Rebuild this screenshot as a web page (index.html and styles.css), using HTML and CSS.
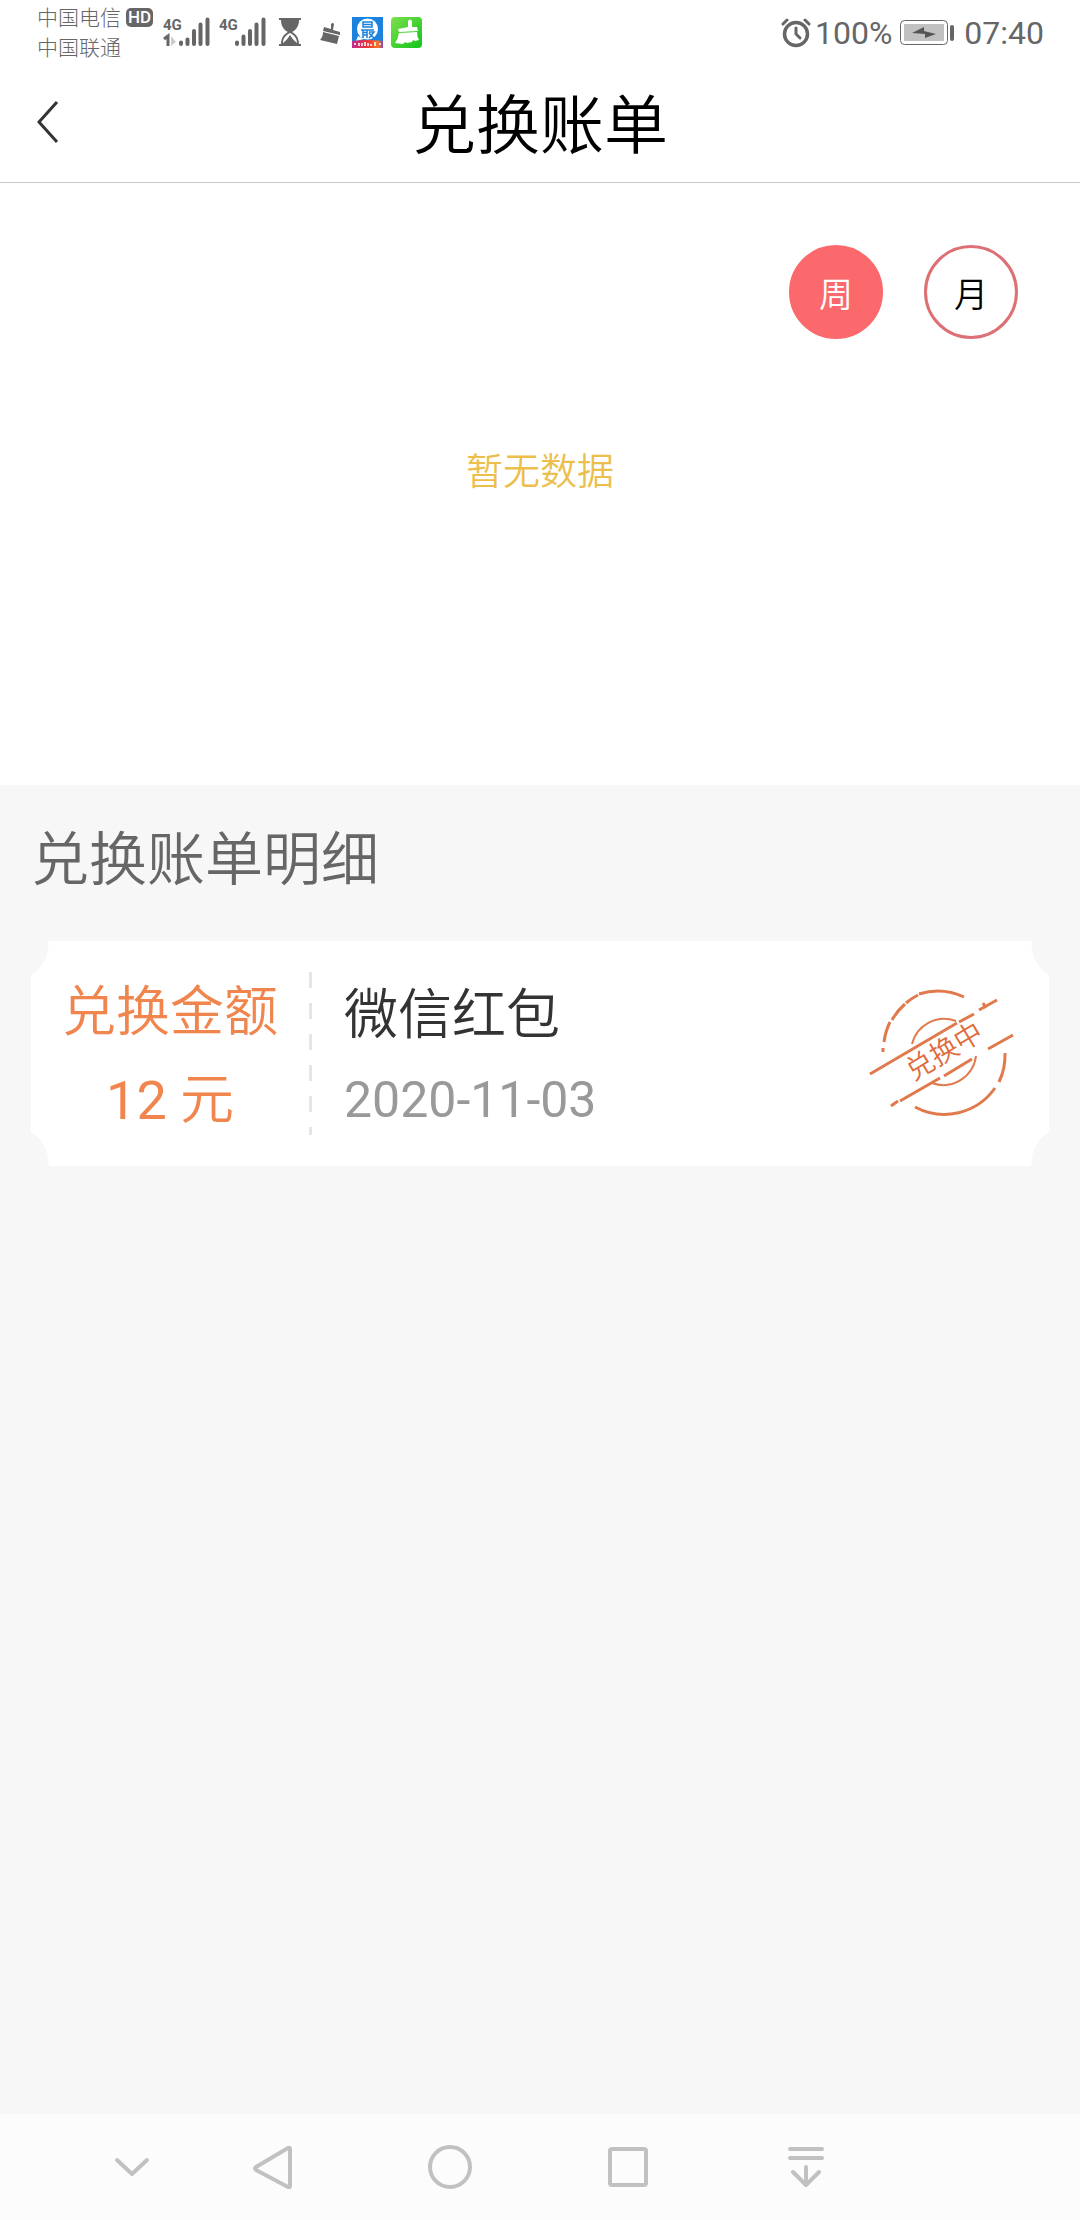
FILE: index.html
```
<!DOCTYPE html>
<html lang="zh-CN">
<head>
    <meta charset="UTF-8">
    <meta name="viewport" content="width=device-width, initial-scale=1">
    <title>兑换账单</title>
    <link rel="stylesheet" href="styles.css">
</head>
<body>
    <!-- 状态栏 -->
    <div class="status">
        <div class="carriers">
            <span>中国电信</span>
            <span>中国联通</span>
        </div>
        <span class="hd">HD</span>
        <div class="status-icons">
            <svg class="signal" width="48" height="32" viewBox="0 0 48 32">
                <text class="net" x="0" y="14">4G</text>
                <path d="M1 23l4-3v10" fill="none" stroke="#666" stroke-width="3"/>
                <path d="M8 20v10l5-4z" fill="#ccc"/>
                <path class="bars" d="M18 26.500v1.500M24.500 23.500v4.500M31 15v13M37.500 8.500v19.500M44.500 3.500v24.500"/>
            </svg>
            <svg class="signal" width="48" height="32" viewBox="0 0 48 32">
                <text class="net" x="0" y="14">4G</text>
                <path class="bars" d="M18 26.500v1.500M24.500 20.500v7.500M31 15v13M37.500 8.500v19.500M44.500 3.500v24.500"/>
            </svg>
            <svg width="22" height="32" viewBox="0 0 22 32">
                <path d="M0 2h22v2H0zM0 28h22v2H0z" fill="#666"/>
                <path d="M2 4h18c0 6-3 10-7 12 4 2 7 6 7 12H2c0-6 3-10 7-12C5 14 2 10 2 4z" fill="#666"/>
                <path d="M11 17c4 2 7 5 7 10l-7-6-7 6c0-5 3-8 7-10z" fill="#fff"/>
                <path d="M11 19l2 3 4 5H5l4-5z" fill="#666"/>
            </svg>
            <svg class="broom" width="22" height="32" viewBox="0 0 22 32">
                <path d="M12 8q2-2 3 0l-1 6 7 2v3L4 15l1-4 7 2zM4 16l16 4-2 8-17-4c2-2 3-5 3-8z" fill="#666"/>
            </svg>
            <svg class="app" width="31" height="31" viewBox="0 0 31 31">
                <defs>
                    <linearGradient id="band">
                        <stop offset="0" stop-color="#c0308f"/>
                        <stop offset=".5" stop-color="#f03038"/>
                        <stop offset=".85" stop-color="#f27a28"/>
                        <stop offset="1" stop-color="#8a3fb0"/>
                    </linearGradient>
                </defs>
                <path d="M0 0h31v31H0z" fill="#1b83dd"/>
                <circle cx="15.500" cy="12" r="10.500" fill="#fff"/>
                <path d="M6 19l-2 5 8-2z" fill="#fff"/>
                <path d="M11 5h9v5h-9zM11 7.500h9M9 13h13M11 13v8M15 13v8M11 15.500h4M11 18h4M17 15h5l-5 6M17 16l5 5" fill="none" stroke="#1b83dd" stroke-width="1.500"/>
                <path d="M0 24q15-2 31 0v7H0z" fill="url(#band)"/>
                <path d="M2 27h2M7 26v3M10 26v3M13 25v4M16 26v3M19 27v2M23 25v4M27 27h2" stroke="#fff" stroke-width="1.500"/>
            </svg>
            <svg class="app" width="31" height="31" viewBox="0 0 31 31">
                <defs>
                    <linearGradient id="green" x1="0" y1="0" x2="1" y2="1">
                        <stop offset="0" stop-color="#7ee04c"/>
                        <stop offset="1" stop-color="#12c41c"/>
                    </linearGradient>
                </defs>
                <rect width="31" height="31" rx="4" fill="url(#green)"/>
                <path d="M17 4q2-3 4 0v6l5 0 1 4L8 15l-1-3 10-2z" fill="#fff"/>
                <path d="M8 16l18-1q0 5 2 8l-4 1-2-1-1 2-5 1-2-1-2 2-8-1q3-4 4-10z" fill="#fff"/>
            </svg>
        </div>
        <div class="status-right">
            <svg width="30" height="30" viewBox="0 0 30 30" fill="none" stroke="#666" stroke-linecap="round">
                <circle cx="15" cy="16" r="11.500" stroke-width="3.500"/>
                <path d="M15 10v6l4 4" stroke-width="3"/>
                <path d="M2 6l4-4M24 2l4 4" stroke-width="3"/>
            </svg>
            <span class="percent">100%</span>
            <svg class="battery" width="55" height="26" viewBox="0 0 55 26">
                <rect x=".5" y=".5" width="47" height="24" rx="4" fill="#fff" stroke="#666"/>
                <rect x="4" y="4" width="40" height="17" fill="#c1c1c1"/>
                <path d="M12 13l12-6v4l12 3-11 4v-4z" fill="#555"/>
                <rect x="50" y="5" width="4" height="16" rx="2" fill="#666"/>
            </svg>
            <time>07:40</time>
        </div>
    </div>

    <header class="header">
        <button class="back" type="button" aria-label="返回">
            <svg width="22" height="42" viewBox="0 0 22 42">
                <path d="M20 1L2 21l18 20" fill="none" stroke="#333" stroke-width="3"/>
            </svg>
        </button>
        <h1>兑换账单</h1>
    </header>

    <section class="chart">
        <div class="tabs">
            <button class="tab active" type="button">周</button>
            <button class="tab" type="button">月</button>
        </div>
        <p class="empty">暂无数据</p>
    </section>

    <main class="detail">
        <h2>兑换账单明细</h2>
        <article class="ticket">
            <div class="amount">
                <p>兑换金额</p>
                <p><span class="number">12</span> 元</p>
            </div>
            <div class="divider"></div>
            <div class="info">
                <h3>微信红包</h3>
                <time>2020-11-03</time>
            </div>
            <!-- 兑换中 印章 -->
            <svg class="stamp" width="150" height="136" viewBox="0 0 150 136">
                <g fill="none" stroke="#e07a4c">
                    <path d="M16 66V62M17 56A62 62 0 0 1 23 36M25 34A62 62 0 0 1 38 18M39 17A62 62 0 0 1 51 9M52 8A62 62 0 0 1 97 11" stroke-width="3"/>
                    <path d="M138 67A62 62 0 0 1 132 96M128 102A62 62 0 0 1 48 121" stroke-width="3"/>
                    <path d="M45 58A33 33 0 0 1 89 35M109 70A33 33 0 0 1 65 97" stroke-width="2"/>
                    <path d="M3 88L90 37M92 36L107 28M112 24L130 14M116 17l3 5M24 120l7-5M33 115L73 92M77 90L105 73M121 63L146 49" stroke-width="3"/>
                </g>
                <text x="77" y="75" transform="rotate(-31 77 65)">兑换中</text>
            </svg>
        </article>
    </main>

    <!-- 系统导航栏 -->
    <nav class="navbar">
        <button class="hide" type="button" aria-label="收起">
            <svg width="44" height="44" viewBox="0 0 44 44"><path d="M7 15l15 14 15-14"/></svg>
        </button>
        <button type="button" aria-label="返回">
            <svg width="44" height="44" viewBox="0 0 44 44"><path d="M40 4v37q0 2-2 1L6 25q-2-2 0-3L38 3q2-1 2 1z"/></svg>
        </button>
        <button type="button" aria-label="主页">
            <svg width="44" height="44" viewBox="0 0 44 44"><circle cx="22" cy="22" r="20"/></svg>
        </button>
        <button type="button" aria-label="最近任务">
            <svg width="44" height="44" viewBox="0 0 44 44"><rect x="4" y="4" width="36" height="36" rx="2"/></svg>
        </button>
        <button type="button" aria-label="通知">
            <svg width="44" height="44" viewBox="0 0 44 44"><path d="M6 4h32M6 13h32M22 22v18M9 27l13 13 13-13"/></svg>
        </button>
    </nav>
</body>
</html>
```
FILE: styles.css
```
* {
    box-sizing: border-box;
}
body {
    display: flex;
    flex-direction: column;
    min-height: 100vh;
    margin: 0;
    background-color: #ffffff;
    font-family: Roboto, "Noto Sans CJK SC", sans-serif;
}
h1, h2, h3, p {
    margin: 0;
    font-weight: 350;
}
button {
    padding: 0;
    border: none;
    background: none;
    font-family: inherit;
}
svg {
    display: block;
    flex: none;
}

/* 状态栏 */
.status {
    display: flex;
    height: 66px;
    padding: 0 36px 0 37px;
    color: #666666;
}
.carriers {
    display: flex;
    flex-direction: column;
    padding-top: 3px;
    font-size: 21px;
    font-weight: 300;
    line-height: 30px;
}
.hd {
    width: 27px;
    height: 19px;
    margin: 8px 0 0 5px;
    border-radius: 5px;
    background-color: #666666;
    color: #ffffff;
    font-size: 17px;
    font-weight: 500;
    line-height: 19px;
    text-align: center;
}
.status-icons {
    display: flex;
    align-items: flex-start;
    gap: 8px;
    padding: 16px 0 0 10px;
}
.signal .bars {
    fill: none;
    stroke: #666666;
    stroke-width: 4;
    stroke-linecap: round;
}
.signal .net {
    fill: #666666;
    font-size: 15px;
    font-weight: 700;
}
.signal + svg {
    margin-left: 4px;
}
.signal + .signal {
    margin-left: 0;
}
.broom {
    margin: 0 3px 0 10px;
}
.app {
    margin-top: 1px;
}
.status-right {
    display: flex;
    align-items: center;
    height: 66px;
    margin-left: auto;
    font-size: 32px;
}
.percent {
    margin-left: 4px;
}
.battery {
    margin: 0 9px 0 8px;
}

/* 标题 */
.header {
    display: grid;
    grid-template-columns: 100px 1fr 100px;
    align-items: center;
    height: 117px;
    border-bottom: 1px solid #c8c8c8;
}
.header h1 {
    grid-column: 2;
    padding-top: 6px;
    color: #000000;
    font-size: 64px;
    line-height: 80px;
    text-align: center;
}
.back {
    height: 100px;
    padding: 0 0 4px 37px;
}

/* 周 / 月 */
.chart {
    height: 602px;
    padding: 62px;
}
.tabs {
    display: flex;
    justify-content: flex-end;
    gap: 41px;
}
.tab {
    width: 94px;
    height: 94px;
    border: 3px solid #dd7075;
    border-radius: 50%;
    color: #000000;
    font-size: 34px;
    font-weight: 350;
}
.tab.active {
    border-color: #fb696c;
    background-color: #fb696c;
    color: #ffffff;
}
.empty {
    margin-top: 109px;
    color: #ecbf4d;
    font-size: 37px;
    line-height: 50px;
    text-align: center;
}

/* 明细 */
.detail {
    flex: 1;
    padding: 35px 31px;
    background-color: #f7f7f7;
}
.detail h2 {
    color: #666666;
    font-size: 58px;
    line-height: 80px;
}
.ticket {
    display: flex;
    align-items: center;
    height: 225px;
    margin-top: 41px;
    background:
        radial-gradient(circle at -19px 3px, #f7f7f7 36px, transparent 37px),
        radial-gradient(circle at calc(100% + 19px) 3px, #f7f7f7 36px, transparent 37px),
        radial-gradient(circle at -19px calc(100% - 3px), #f7f7f7 36px, transparent 37px),
        radial-gradient(circle at calc(100% + 19px) calc(100% - 3px), #f7f7f7 36px, transparent 37px),
        #ffffff;
}
.amount {
    width: 278px;
    padding-top: 7px;
    color: #f0854d;
    font-size: 54px;
    line-height: 88px;
    text-align: center;
}
.amount .number {
    font-weight: 400;
}
.divider {
    width: 3px;
    height: 163px;
    background: repeating-linear-gradient(#e5e5e5 0, #e5e5e5 16px, transparent 16px, transparent 31px);
}
.info {
    flex: 1;
    padding: 8px 0 0 32px;
    line-height: 84px;
}
.info h3 {
    color: #333333;
    font-size: 54px;
}
.info time {
    display: block;
    color: #999999;
    font-size: 50px;
}
.stamp {
    margin-right: 32px;
}
.stamp text {
    fill: #dd6d3c;
    font-size: 28px;
    font-weight: 350;
    text-anchor: middle;
}

/* 导航栏 */
.navbar {
    display: flex;
    height: 106px;
    padding: 0 185px 0 80px;
    background-color: #fcfcfc;
}
.navbar button {
    display: flex;
    flex: 178;
    align-items: center;
    justify-content: center;
}
.navbar .hide {
    flex: 103;
}
.navbar svg {
    fill: none;
    stroke: #c1c1c1;
    stroke-width: 4;
    stroke-linecap: round;
    stroke-linejoin: round;
}
```
